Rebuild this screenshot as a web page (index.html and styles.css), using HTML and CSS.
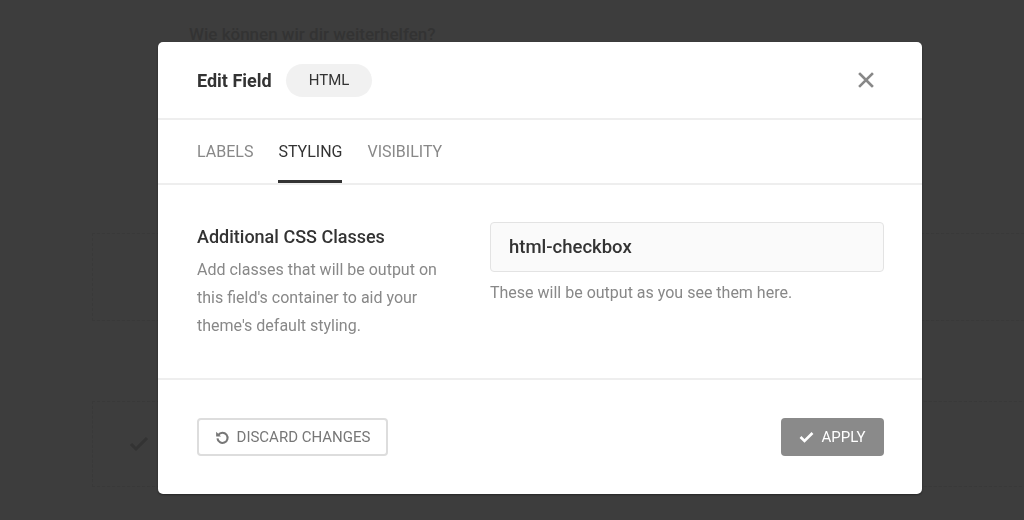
FILE: index.html
```html
<!DOCTYPE html>
<html lang="de">
<head>
    <meta charset="UTF-8">
    <title>Edit Field</title>
    <link rel="stylesheet" href="styles.css">
</head>

<body>
    <div class="page">
        <h2 class="page_title">Wie können wir dir weiterhelfen?</h2>
        <div class="field_box"></div>
        <div class="field_box check_box">
            <svg class="bg_check" width="20" height="16" viewBox="0 0 20 16"><path d="M2 8l5 5L18 2" fill="none" stroke="#333" stroke-width="3"/></svg>
        </div>
    </div>

    <div class="overlay">
        <div class="modal">
            <div class="modal_head">
                <span class="modal_title">Edit Field</span>
                <span class="pill">HTML</span>
                <span class="close">
                    <svg width="16" height="16" viewBox="0 0 16 16"><path d="M2 2L14 14M14 2L2 14" stroke="#888" stroke-width="2.6" stroke-linecap="square"/></svg>
                </span>
            </div>

            <ul class="tabs">
                <li>Labels</li>
                <li class="active">Styling</li>
                <li>Visibility</li>
            </ul>

            <div class="modal_body">
                <div class="setting_info">
                    <div class="setting_label">Additional CSS Classes</div>
                    <p class="setting_desc">Add classes that will be output on this field's container to aid your theme's default styling.</p>
                </div>
                <div class="setting_control">
                    <div class="text_input">html-checkbox</div>
                    <p class="help">These will be output as you see them here.</p>
                </div>
            </div>

            <div class="modal_foot">
                <button class="btn btn_discard">
                    <svg width="15" height="15" viewBox="0 0 16 16"><path d="M3.6 5.2A5.4 5.4 0 1 1 2.6 9" fill="none" stroke="#777" stroke-width="2.2"/><path d="M1.2 1.8v5.2h5.2z" fill="#777"/></svg>
                    Discard Changes
                </button>
                <button class="btn btn_apply">
                    <svg width="15" height="12" viewBox="0 0 15 12"><path d="M1.5 6l4 4L13.5 2" fill="none" stroke="#fff" stroke-width="2.6"/></svg>
                    Apply
                </button>
            </div>
        </div>
    </div>
</body>
</html>
```

FILE: styles.css
```css
body
{
    margin: 0;
    background: #3d3d3d;
    font-family: Roboto, "Liberation Sans", sans-serif;
    color: #333;
}
.page
{
    padding: 24px 0 0 92px;
}
.page_title
{
    margin: 0 0 0 97px;
    font-size: 17px;
    font-weight: 500;
    color: #333;
}
.field_box
{
    margin-top: 189px;
    width: 940px;
    height: 86px;
    border: 1px dashed #393939;
}
.check_box
{
    margin-top: 80px;
    display: flex;
    align-items: center;
    padding-left: 36px;
    box-sizing: border-box;
}
.overlay
{
    position: fixed;
    left: 0;
    top: 0;
    right: 0;
    bottom: 0;
    display: flex;
    align-items: flex-start;
    padding: 42px 0 0 158px;
}
.modal
{
    width: 764px;
    background: #fff;
    border-radius: 5px;
    box-shadow: 0 1px 2px rgba(0,0,0,0.4);
}
.modal_head
{
    height: 78px;
    display: flex;
    align-items: center;
    padding: 0 48px 0 39px;
    border-bottom: 2px solid #eee;
    box-sizing: border-box;
}
.modal_title
{
    font-size: 18px;
    font-weight: 700;
    color: #333;
}
.pill
{
    margin-left: 14px;
    height: 33px;
    line-height: 33px;
    padding: 0 23px;
    border-radius: 17px;
    background: #f1f1f1;
    font-size: 15px;
    color: #333;
}
.close
{
    margin-left: auto;
    display: flex;
    cursor: pointer;
}
.tabs
{
    list-style: none;
    margin: 0;
    padding: 0 39px;
    display: flex;
    gap: 25px;
    height: 63px;
    border-bottom: 2px solid #eee;
}
.tabs>li
{
    font-size: 16px;
    text-transform: uppercase;
    color: #888;
    padding-top: 22px;
    box-sizing: border-box;
    border-bottom: 3px solid transparent;
    cursor: pointer;
}
.tabs .active
{
    color: #333;
    border-bottom-color: #333;
}
.modal_body
{
    display: flex;
    gap: 40px;
    padding: 37px 38px 38px 39px;
    border-bottom: 2px solid #eee;
}
.setting_info
{
    width: 253px;
    flex: none;
}
.setting_label
{
    font-size: 18px;
    font-weight: 500;
    color: #333;
    margin-top: 4px;
}
.setting_desc
{
    margin: 9px 0 0;
    font-size: 16px;
    line-height: 28px;
    color: #888;
}
.setting_control
{
    flex: 1;
}
.text_input
{
    height: 50px;
    line-height: 48px;
    box-sizing: border-box;
    padding: 0 18px;
    background: #fafafa;
    border: 1px solid #e3e3e3;
    border-radius: 4px;
    font-size: 18.5px;
    font-weight: 500;
    color: #333;
}
.help
{
    margin: 11px 0 0;
    font-size: 16px;
    color: #888;
}
.modal_foot
{
    display: flex;
    justify-content: space-between;
    padding: 38px 38px 38px 39px;
}
.btn
{
    height: 38px;
    display: flex;
    align-items: center;
    gap: 7px;
    border-radius: 4px;
    font-family: Roboto, "Liberation Sans", sans-serif;
    font-size: 15px;
    text-transform: uppercase;
    cursor: pointer;
}
.btn_discard
{
    width: 191px;
    justify-content: center;
    background: #fff;
    border: 2px solid #ddd;
    color: #777;
}
.btn_apply
{
    width: 103px;
    justify-content: center;
    background: #8a8a8a;
    border: none;
    color: #fff;
}
```
